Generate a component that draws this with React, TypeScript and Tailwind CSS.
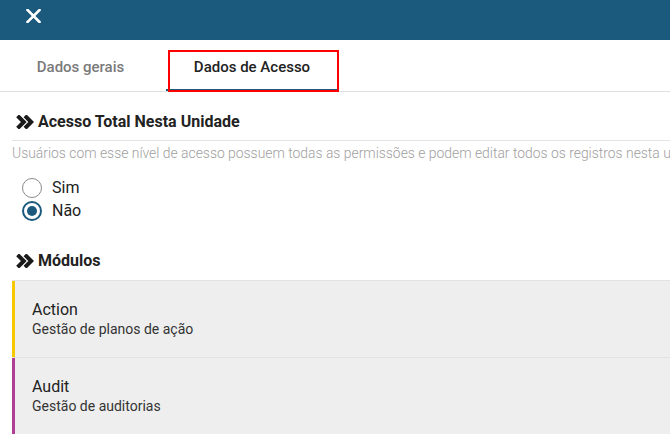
import React from "react";

const Chevrons = () => (
  <svg width="18" height="14" viewBox="0 0 18 14" className="shrink-0">
    <path d="M1.6 0.8 L7.8 7 L1.6 13.2" fill="none" stroke="#1a1a1a" strokeWidth="4" strokeLinejoin="miter" />
    <path d="M9 0.8 L15.2 7 L9 13.2" fill="none" stroke="#1a1a1a" strokeWidth="4" strokeLinejoin="miter" />
  </svg>
);

const Radio = ({ checked, label }: { checked?: boolean; label: string }) => (
  <div className="flex h-[23px] items-center">
    <div
      className={
        checked
          ? "flex h-[20px] w-[20px] items-center justify-center rounded-full border-2 border-[#1c5a7d]"
          : "flex h-[20px] w-[20px] items-center justify-center rounded-full border-[1.5px] border-[#8a8a8a]"
      }
    >
      {checked && <div className="h-[10px] w-[10px] rounded-full bg-[#1c5a7d]" />}
    </div>
    <span className="ml-[10px] text-[16px] leading-[20px] text-[#222]">{label}</span>
  </div>
);

const Module = ({ title, sub, color }: { title: string; sub: string; color: string }) => (
  <div className="flex border-t border-[#e2e2e2] bg-[#eeeeee]">
    <div className={`w-[3px] shrink-0 ${color}`} />
    <div className="pl-[17px] pt-[19px] pb-[19px]">
      <div className="text-[16px] leading-[20px] text-[#222]">{title}</div>
      <div className="text-[14px] leading-[18px] text-[#333]">{sub}</div>
    </div>
  </div>
);

export default function App() {
  return (
    <div
      className="h-[436px] w-[670px] overflow-hidden bg-white"
      style={{ fontFamily: "Roboto, 'Liberation Sans', sans-serif" }}
    >
      <div className="flex h-[40px] items-start bg-[#1c5a7d] pl-[26px] pt-[9px]">
        <svg width="15" height="14" viewBox="0 0 15 14">
          <path d="M1.5 1 L13.5 13 M13.5 1 L1.5 13" stroke="white" strokeWidth="2.6" strokeLinecap="square" />
        </svg>
      </div>

      <div className="relative flex h-[52px] border-b border-[#e0e0e0]">
        <div className="flex w-[161px] items-center justify-center pt-[4px] text-[15px] font-medium text-[#7a7a7a]">
          Dados gerais
        </div>
        <div className="ml-[5px] flex w-[172px] items-center justify-center border-b-2 border-[#1c5a7d] pt-[6px] text-[15px] font-medium text-[#222]">
          Dados de Acesso
        </div>
        <div className="absolute left-[168px] top-[10px] h-[42px] w-[171px] border-2 border-[#ff0000]" />
      </div>

      <div className="pl-[12px]">
        <div className="mt-[18px] flex h-[24px] items-center pl-[4px]">
          <Chevrons />
          <span className="ml-[4px] text-[16px] font-bold text-[#222]">Acesso Total Nesta Unidade</span>
        </div>
        <div className="mt-[6px] border-t border-[#e4e4e4]" />
        <div className="mt-[3px] overflow-hidden whitespace-nowrap text-[13.9px] font-light leading-[18px] text-[#a0a0a0]">
          Usuários com esse nível de acesso possuem todas as permissões e podem editar todos os registros nesta unidade.
        </div>

        <div className="mt-[14px] pl-[10px]">
          <Radio label="Sim" />
          <Radio label="Não" checked />
        </div>

        <div className="mt-[27px] flex h-[24px] items-center pl-[4px]">
          <Chevrons />
          <span className="ml-[4px] text-[16px] font-bold text-[#222]">Módulos</span>
        </div>

        <div className="mt-[7px]">
          <Module title="Action" sub="Gestão de planos de ação" color="bg-[#f5c800]" />
          <Module title="Audit" sub="Gestão de auditorias" color="bg-[#b03f94]" />
        </div>
      </div>
    </div>
  );
}
